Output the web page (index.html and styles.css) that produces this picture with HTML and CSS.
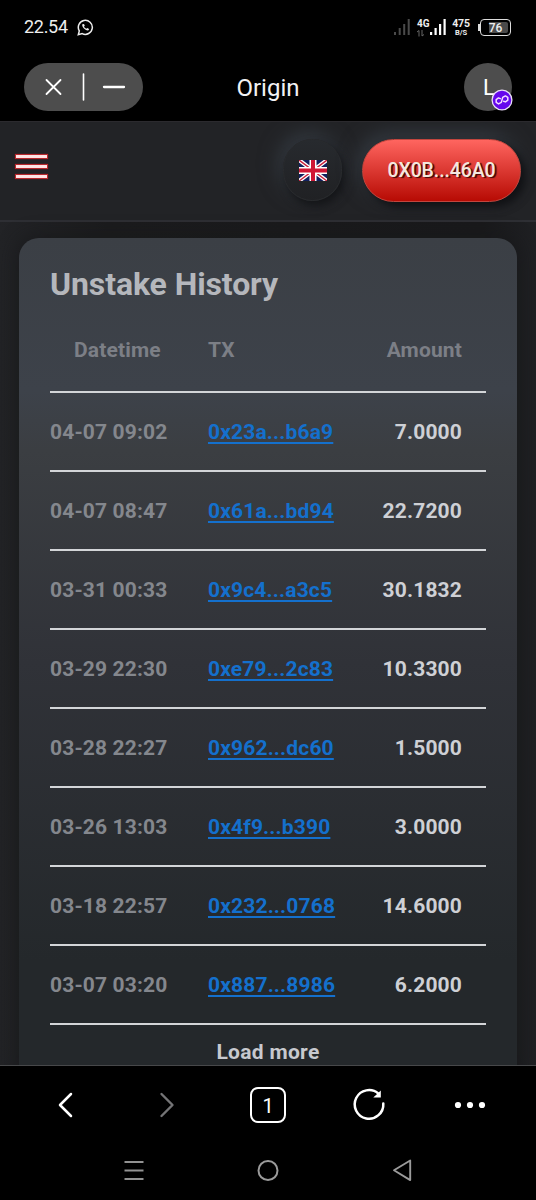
FILE: index.html
```html
<!DOCTYPE html>
<html lang="en">
<head>
<meta charset="utf-8">
<title>Origin</title>
<link rel="stylesheet" href="styles.css">
</head>
<body>
<div class="phone">
  <div class="status">
    <span class="clock">22.54</span>
    <svg class="whatsapp" width="17" height="17" viewBox="0 0 17 17" fill="none" stroke="#eee" stroke-width="1.500"><path d="M1.300 15.700l1-3.800A7 7 0 1 1 5.200 14.600z"/><path d="M5.300 5.200c-.8 2.600 3.400 7 6.300 6.100l.5-1.400-1.800-.9-1 .8C8.200 9.400 7.300 8.500 7 7.600l.8-.9-.8-1.800z" fill="#eee" stroke="none"/></svg>
    <svg class="signal-dim" width="17" height="17" viewBox="0 0 17 17" fill="#4a4a4a"><path d="M0 13h2v3H0zM4.700 9h2v7h-2zM9.200 5h2v11h-2zM13.700 0h2v16h-2z"/></svg>
    <div class="network"><span>4G</span><svg width="8" height="7" viewBox="0 0 8 7" fill="none" stroke="#666"><path d="M0 2L2 .5V6.500M5 0V6L7 4.500"/></svg></div>
    <svg class="signal" width="17" height="17" viewBox="0 0 17 17" fill="#fff"><path d="M0 13h2.200v3H0zM4.500 9h2.200v7H4.500zM9 5h2.200v11H9zM13.500 0h2.200v16h-2.200z"/></svg>
    <div class="rate"><span>475</span><span class="unit">B/S</span></div>
    <div class="battery"><span>76</span></div>
  </div>

  <div class="appbar">
    <div class="pill">
      <svg width="119" height="48" viewBox="0 0 119 48" fill="none" stroke="#fff" stroke-width="1.800" stroke-linecap="round"><path d="M22.500 17l14 14M36.500 17l-14 14"/><path d="M59.500 11v26" stroke-width="1.600"/><path d="M80 24h20" stroke-width="2.300"/></svg>
    </div>
    <div class="app-title">Origin</div>
    <div class="avatar">L
      <svg class="chain" width="22" height="22" viewBox="0 0 22 22" fill="none"><circle cx="11" cy="11" r="9.900" fill="#6507ed" stroke="#e9ddf8" stroke-width="1.300"/><path d="M9.300 9.600L7.500 8.900 5.200 10.600v2.800l2.400 1.500 2.700-1.500 1.400-5 2.700-1.500 2.400 1.500v2.800l-2.300 1.700-1.900-.7" stroke="#f3dcff" stroke-width="1.500" stroke-linecap="round" stroke-linejoin="round"/></svg>
    </div>
  </div>

  <div class="site">
    <header class="nav">
      <div class="menu"><i></i><i></i><i></i></div>
      <div class="language">
        <svg width="28" height="21" viewBox="0 0 28 21"><path fill="#12205f" d="M0 0h28v21H0z"/><path d="M0 0l28 21M28 0L0 21" stroke="#fff" stroke-width="4"/><path d="M0 0l28 21M28 0L0 21" stroke="#c9203c" stroke-width="1.400"/><path d="M14 0v21M0 10.500h28" stroke="#fff" stroke-width="7"/><path d="M14 0v21M0 10.500h28" stroke="#cf1735" stroke-width="4"/></svg>
      </div>
      <div class="wallet">0X0B...46A0</div>
    </header>
    <main class="card">
      <h1>Unstake History</h1>
      <div class="row head"><span class="date">Datetime</span><span class="tx">TX</span><span class="amount">Amount</span></div>
      <div class="row"><span class="date">04-07 09:02</span><a class="tx">0x23a...b6a9</a><span class="amount">7.0000</span></div>
      <div class="row"><span class="date">04-07 08:47</span><a class="tx">0x61a...bd94</a><span class="amount">22.7200</span></div>
      <div class="row"><span class="date">03-31 00:33</span><a class="tx">0x9c4...a3c5</a><span class="amount">30.1832</span></div>
      <div class="row"><span class="date">03-29 22:30</span><a class="tx">0xe79...2c83</a><span class="amount">10.3300</span></div>
      <div class="row"><span class="date">03-28 22:27</span><a class="tx">0x962...dc60</a><span class="amount">1.5000</span></div>
      <div class="row"><span class="date">03-26 13:03</span><a class="tx">0x4f9...b390</a><span class="amount">3.0000</span></div>
      <div class="row"><span class="date">03-18 22:57</span><a class="tx">0x232...0768</a><span class="amount">14.6000</span></div>
      <div class="row"><span class="date">03-07 03:20</span><a class="tx">0x887...8986</a><span class="amount">6.2000</span></div>
      <div class="more">Load more</div>
    </main>
  </div>

  <div class="toolbar">
    <svg width="40" height="40" viewBox="0 0 40 40" fill="none" stroke="#fff" stroke-width="2.500" stroke-linecap="round" stroke-linejoin="round"><path d="M25 9L14 20l11 11"/></svg>
    <svg width="40" height="40" viewBox="0 0 40 40" fill="none" stroke="#747476" stroke-width="2.400" stroke-linecap="round" stroke-linejoin="round"><path d="M14.500 9l11 11-11 11"/></svg>
    <div class="tab-slot"><span class="tabs">1</span></div>
    <svg width="40" height="40" viewBox="0 0 40 40" fill="none" stroke="#fff" stroke-width="2.500"><path d="M34.300 18.500A14.300 14.300 0 1 1 29.500 8.700" stroke-linecap="round"/><path d="M31.800 5.500v7h-7.500z" fill="#fff" stroke="none"/></svg>
    <svg width="40" height="40" viewBox="0 0 40 40" fill="#fff"><circle cx="8" cy="20" r="3.100"/><circle cx="20" cy="20" r="3.100"/><circle cx="32" cy="20" r="3.100"/></svg>
  </div>
  <div class="system">
    <svg width="30" height="30" viewBox="0 0 30 30" stroke="#929292" stroke-width="2"><path d="M5.500 6h19M5.500 14.500h19M5.500 23h19"/></svg>
    <svg width="30" height="30" viewBox="0 0 30 30" fill="none" stroke="#9b9b9b" stroke-width="2"><circle cx="15" cy="14.500" r="9.500"/></svg>
    <svg width="30" height="30" viewBox="0 0 30 30" fill="none" stroke="#9b9b9b" stroke-width="1.900" stroke-linejoin="round"><path d="M23.200 4.500v19.600L7 14.300z"/></svg>
  </div>
</div>
</body>
</html>
```

FILE: styles.css
```css
* { box-sizing: border-box; }
body { margin: 0; background: #000; font-family: Roboto, "Liberation Sans", sans-serif; }
svg { display: block; flex: none; }
.phone { width: 536px; height: 1200px; display: flex; flex-direction: column; overflow: hidden; background: #000; color: #fff; }

.status { height: 54px; flex: none; display: flex; align-items: center; padding: 0 24px; color: #eee; }
.clock { font-size: 18px; width: 53px; line-height: 22px; letter-spacing: -.3px; }
.signal-dim { margin-left: 300px; }
.network { width: 14px; height: 19px; margin-left: 6px; font-size: 10px; font-weight: 700; line-height: 11px; }
.network svg { margin-top: 1px; }
.signal { margin-left: -1px; }
.rate { width: 18px; margin: 1px 8px 0 5px; display: flex; flex-direction: column; align-items: center; font-size: 10.500px; font-weight: 700; line-height: 11px; letter-spacing: -.2px; }
.unit { font-size: 7.500px; line-height: 8px; letter-spacing: 0; }
.battery { position: relative; width: 31px; height: 17px; margin-left: 2px; border: 1.500px solid #ddd; border-radius: 4px; padding: 2px; display: flex; }
.battery::before { content: ""; position: absolute; left: -3px; top: 4px; width: 1.500px; height: 7px; background: #ddd; }
.battery span { flex: 1; background: linear-gradient(90deg, #000 25%, #4a4a4a 25%); border-radius: 2px; font-size: 12px; font-weight: 500; line-height: 12px; text-align: center; }

.appbar { height: 67px; flex: none; padding: 9px 24px 0; display: flex; align-items: flex-start; }
.pill { width: 119px; height: 48px; border-radius: 24px; background: #4d4d4d; }
.app-title { flex: 1; font-size: 24px; line-height: 50px; text-align: center; color: #f2f2f4; padding-right: 71px; }
.avatar { position: relative; width: 48px; height: 48px; border-radius: 50%; background: #4d4d4d; font-size: 22px; font-weight: 400; line-height: 50px; text-align: center; padding-left: 2px; }
.chain { position: absolute; left: 27px; top: 26px; }

.site { height: 945px; flex: none; overflow: hidden; border-bottom: 1px solid #47484a; background: linear-gradient(90deg, #222326 0, #1b1b1d 20%, #19191b 90%, #1f2023 100%); }
.nav { height: 101px; display: flex; align-items: center; padding: 0 15px 2px; border-bottom: 2px solid #2e2f34; border-top: 1px solid #2b2a2e; background: #222326; overflow: hidden; }
.menu { display: flex; flex-direction: column; gap: 5px; margin-right: 235px; margin-top: -8px; }
.menu i { display: block; width: 33px; height: 5px; background: #ffe3e3; border: 1px solid #b8272c; box-shadow: 0 0 1px #8c191f; }
.language { width: 59px; height: 62px; border-radius: 31px; display: flex; align-items: center; justify-content: center; background: linear-gradient(#272a2e, #202124); border: 1.500px solid #292b2e; box-shadow: 3px 5px 9px #141518, -4px -6px 20px #343a41; }
.wallet { width: 159px; height: 63px; margin-left: 20px; flex: none; border-radius: 32px; background: linear-gradient(#ff655f, #b70b04); border: 1.500px solid #c2463e; box-shadow: 5px 5px 9px #101114, -4px -6px 20px #343a41; color: #f3e8df; font-size: 19.500px; font-weight: 500; letter-spacing: -.1px; line-height: 61px; text-align: center; text-shadow: 2px 1px 1px #400806; }

.card { margin: 16px 19px 0; width: 498px; height: 850px; border-radius: 20px; padding: 24px 31px; background: linear-gradient(#3b3f45 0, #3d424a 18%, #3b3e42 25%, #303238 50%, #24282b 85%, #24282b 100%); box-shadow: 0 0 20px #18191b; font-weight: 700; letter-spacing: .15px; }
h1 { margin: 0 0 22px; font-size: 32px; line-height: 44px; color: #b5b7bc; letter-spacing: -.1px; }
.row { height: 79px; display: flex; align-items: center; padding-top: 2px; border-bottom: 2px solid #d3d5d8; font-size: 21px; line-height: 25px; }
.row.head { height: 65px; padding-bottom: 20px; }
.date { width: 158px; color: #84878d; }
.tx { width: 150px; color: #1470cd; text-decoration: underline; text-decoration-thickness: 1.500px; text-underline-offset: 2.500px; }
.amount { flex: 1; text-align: right; padding-right: 24px; color: #ced0d5; }
.head .date { padding-left: 24px; }
.head .tx, .head .amount { color: #7c7f86; text-decoration: none; }
.head .date { color: #7c7f86; }
.more { text-align: center; font-size: 21px; line-height: 25px; padding-top: 15px; color: #c7c9ce; letter-spacing: .3px; }

.toolbar { height: 78px; flex: none; padding: 0 46px; display: flex; align-items: center; justify-content: space-between; }
.tab-slot { width: 40px; display: flex; justify-content: center; }
.tabs { width: 36px; height: 36px; border: 2px solid #fff; border-radius: 8px; font-size: 20px; line-height: 34px; text-align: center; }
.system { height: 54px; flex: none; display: flex; align-items: center; justify-content: space-between; padding: 0 119px; }
```
